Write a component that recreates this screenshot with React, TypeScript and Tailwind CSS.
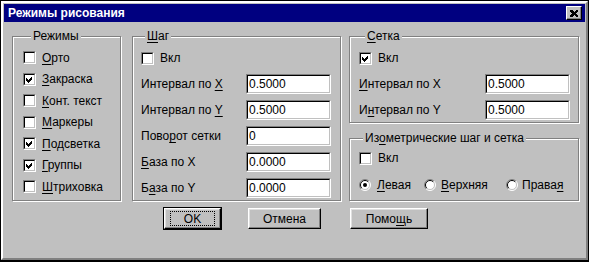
import React from 'react';

const FONT = "font-['Liberation_Sans',Arial,sans-serif]";

function Mn({ text, at }: { text: string; at: number }) {
  return (
    <span>
      {text.slice(0, at)}
      <span className="underline decoration-1 underline-offset-[2px]">{text[at]}</span>
      {text.slice(at + 1)}
    </span>
  );
}

function CheckBox({ checked }: { checked?: boolean }) {
  return (
    <span className="flex h-[13px] w-[13px] shrink-0 border border-t-[#808080] border-l-[#808080] border-r-white border-b-white">
      <span className="flex h-full w-full items-center justify-center border border-t-black border-l-black border-r-[#c0c0c0] border-b-[#c0c0c0] bg-white">
        {checked && (
          <svg width="7" height="7" viewBox="0 0 7 7" shapeRendering="crispEdges">
            <path d="M0 2L2 4L6 0V3L2 7L0 5Z" fill="black" />
          </svg>
        )}
      </span>
    </span>
  );
}

function Radio({ on }: { on?: boolean }) {
  return (
    <svg width="12" height="12" viewBox="0 0 12 12" className="shrink-0">
      <circle cx="6" cy="6" r="5" fill="white" />
      <path d="M2.1 9.9A5.5 5.5 0 0 1 9.9 2.1" stroke="#808080" fill="none" />
      <path d="M9.9 2.1A5.5 5.5 0 0 1 2.1 9.9" stroke="white" fill="none" />
      <path d="M2.8 9.2A4.5 4.5 0 0 1 9.2 2.8" stroke="black" fill="none" />
      <path d="M9.2 2.8A4.5 4.5 0 0 1 2.8 9.2" stroke="#c0c0c0" fill="none" />
      {on && <circle cx="6" cy="6" r="2" fill="black" />}
    </svg>
  );
}

function CheckRow({ label, checked, className = '' }: { label: React.ReactNode; checked?: boolean; className?: string }) {
  return (
    <div className={`flex items-center gap-[6px] ${className}`}>
      <CheckBox checked={checked} />
      <span>{label}</span>
    </div>
  );
}

function Field({ value }: { value: string }) {
  return (
    <div className="h-[20px] w-[85px] border border-t-[#808080] border-l-[#808080] border-r-white border-b-white">
      <div className="flex h-full items-center border border-t-black border-l-black border-r-[#c0c0c0] border-b-[#c0c0c0] bg-white px-[1px]">
        {value}
      </div>
    </div>
  );
}

function InputRow({ label, value, labelW }: { label: React.ReactNode; value: string; labelW: string }) {
  return (
    <div className="flex h-[20px] items-center">
      <span className={labelW}>{label}</span>
      <Field value={value} />
    </div>
  );
}

function Group({
  legend,
  legendClass = '',
  className = '',
  children,
}: {
  legend: React.ReactNode;
  legendClass?: string;
  className?: string;
  children: React.ReactNode;
}) {
  return (
    <fieldset className={`border border-[#808080] shadow-[inset_1px_1px_0_#ffffff,1px_1px_0_#ffffff] ${className}`}>
      <legend className={`bg-[#c0c0c0] px-[2px] leading-[14px] ${legendClass}`}>{legend}</legend>
      {children}
    </fieldset>
  );
}

function Button({ children, def, className = '' }: { children: React.ReactNode; def?: boolean; className?: string }) {
  const face = (
    <div className="flex h-full w-full items-center justify-center border border-t-white border-l-white border-r-black border-b-black bg-[#c0c0c0] shadow-[inset_-1px_-1px_0_#808080,inset_1px_1px_0_#dfdfdf]">
      {def ? (
        <span className="flex h-[15px] w-[45px] items-center justify-center border border-dotted border-black">{children}</span>
      ) : (
        children
      )}
    </div>
  );
  if (def) {
    return <div className={`border border-black ${className}`}>{face}</div>;
  }
  return <div className={className}>{face}</div>;
}

export default function App() {
  return (
    <div className={`h-[262px] w-[589px] bg-black pt-[1px] pl-[1px] pr-[1px] pb-[2px] text-[12px] text-black ${FONT}`}>
      <div className="flex h-full flex-col border-2 border-t-white border-l-white border-r-[#808080] border-b-[#808080] bg-[#c0c0c0] p-[1px]">
        {/* title bar */}
        <div className="flex h-[18px] shrink-0 items-center justify-between bg-[#000080] pr-[3px] pl-[4px]">
          <span className="text-[12px] font-bold text-white">Режимы рисования</span>
          <div className="flex h-[14px] w-[16px] items-center justify-center border border-t-white border-l-white border-r-black border-b-black bg-[#c0c0c0] shadow-[inset_-1px_-1px_0_#808080]">
            <svg width="8" height="7" viewBox="0 0 8 7" shapeRendering="crispEdges">
              <path d="M0 0h2l2 2l2-2h2v1l-2 2.5l2 2.5v1h-2l-2-2l-2 2h-2v-1l2-2.5l-2-2.5z" fill="black" />
            </svg>
          </div>
        </div>

        {/* groups */}
        <div className="mt-[7px] flex pl-[8px]">
          <Group legend="Режимы" legendClass="ml-[8px]" className="h-[172px] w-[109px] pt-[4px] pl-[10px]">
            <CheckRow className="h-[21.5px]" label={<Mn text="Орто" at={0} />} />
            <CheckRow className="h-[21.5px]" label={<Mn text="Закраска" at={0} />} checked />
            <CheckRow className="h-[21.5px]" label={<Mn text="Конт. текст" at={0} />} />
            <CheckRow className="h-[21.5px]" label={<Mn text="Маркеры" at={0} />} />
            <CheckRow className="h-[21.5px]" label={<Mn text="Подсветка" at={0} />} checked />
            <CheckRow className="h-[21.5px]" label={<Mn text="Группы" at={0} />} checked />
            <CheckRow className="h-[21.5px]" label={<Mn text="Штриховка" at={0} />} />
          </Group>

          <Group legend={<Mn text="Шаг" at={0} />} legendClass="ml-[4px]" className="ml-[11px] flex h-[172px] w-[209px] flex-col gap-[6px] pt-[5px] pl-[8px]">
            <CheckRow className="h-[20px]" label="Вкл" />
            <InputRow labelW="w-[105px]" label={<Mn text="Интервал по X" at={12} />} value="0.5000" />
            <InputRow labelW="w-[105px]" label={<Mn text="Интервал по Y" at={12} />} value="0.5000" />
            <InputRow labelW="w-[105px]" label={<Mn text="Поворот сетки" at={4} />} value="0" />
            <InputRow labelW="w-[105px]" label={<Mn text="База по X" at={0} />} value="0.0000" />
            <InputRow labelW="w-[105px]" label={<Mn text="База по Y" at={1} />} value="0.0000" />
          </Group>

          <div className="ml-[8px] flex flex-col gap-[8px]">
            <Group legend={<Mn text="Сетка" at={0} />} legendClass="ml-[6px]" className="flex h-[94px] w-[230px] flex-col gap-[6px] pt-[5px] pl-[9px]">
              <CheckRow className="h-[20px]" label="Вкл" checked />
              <InputRow labelW="w-[126px]" label={<Mn text="Интервал по X" at={0} />} value="0.5000" />
              <InputRow labelW="w-[126px]" label={<Mn text="Интервал по Y" at={1} />} value="0.5000" />
            </Group>
            <Group
              legend={<Mn text="Изометрические шаг и сетка" at={2} />}
              legendClass="ml-[4px]"
              className="flex h-[70px] w-[230px] flex-col gap-[7px] pt-[3px] pl-[9px]"
            >
              <CheckRow className="h-[20px]" label="Вкл" />
              <div className="flex h-[20px] items-center">
                <div className="flex w-[65px] items-center gap-[6px]">
                  <Radio on />
                  <Mn text="Левая" at={0} />
                </div>
                <div className="flex w-[82px] items-center gap-[5px]">
                  <Radio />
                  <Mn text="Верхняя" at={0} />
                </div>
                <div className="flex items-center gap-[4px]">
                  <Radio />
                  <Mn text="Правая" at={5} />
                </div>
              </div>
            </Group>
          </div>
        </div>

        {/* buttons */}
        <div className="mt-[6px] flex items-start pl-[159px]">
          <Button def className="h-[23px] w-[59px]">OK</Button>
          <Button className="mt-[1px] ml-[26px] h-[21px] w-[73px]">Отмена</Button>
          <Button className="mt-[1px] ml-[29px] h-[21px] w-[78px]">
            <Mn text="Помощь" at={4} />
          </Button>
        </div>
      </div>
    </div>
  );
}
